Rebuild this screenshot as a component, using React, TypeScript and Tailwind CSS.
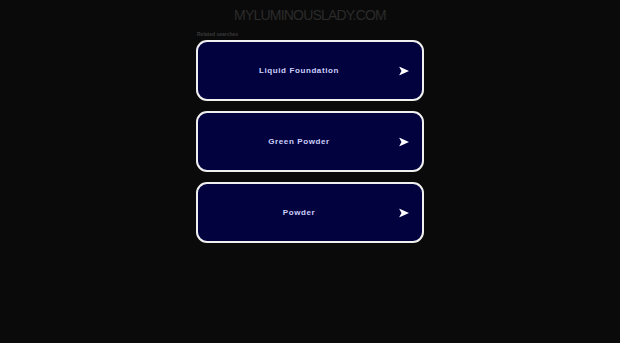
import React from "react";

const items = ["Liquid Foundation", "Green Powder", "Powder"];

function Arrow() {
  return (
    <svg width="10" height="9" viewBox="0 0 10 9" className="block">
      <path d="M0 0 L10 4.5 L0 9 L2.5 4.5 Z" fill="#ffffff" />
    </svg>
  );
}

export default function App() {
  return (
    <div
      className="w-[620px] h-[343px] bg-[#0a0a0a] overflow-hidden"
      style={{ fontFamily: '"Liberation Sans", Arial, sans-serif' }}
    >
      <div className="pt-[7px] text-center text-[14px] leading-[17px] tracking-[-0.8px] text-[#2b2b2b]">
        MYLUMINOUSLADY.COM
      </div>
      <div className="w-[228px] mx-auto mt-[7px]">
        <div className="text-[5px] leading-[6px] text-[#3a3a3a] font-bold pl-[1px]">Related searches</div>
        <div className="mt-[3px] flex flex-col gap-[10px]">
          {items.map((t) => (
            <div
              key={t}
              className="h-[61px] rounded-[11px] border-2 border-[#f0f0f0] bg-[#02023f] flex items-center relative"
            >
              <div className="flex-1 text-center text-[8px] font-bold tracking-[0.6px] text-[#cdd0fa] pr-[22px]">
                {t}
              </div>
              <div className="absolute right-[13px] top-1/2 -translate-y-1/2">
                <Arrow />
              </div>
            </div>
          ))}
        </div>
      </div>
    </div>
  );
}
